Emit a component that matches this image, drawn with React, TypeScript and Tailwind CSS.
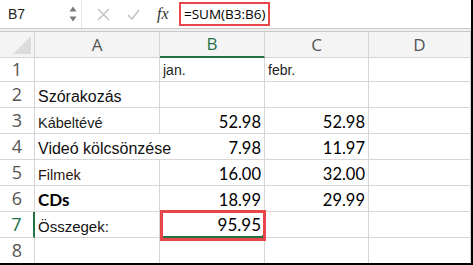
import React from "react";

function Cell({
  children,
  className = "",
}: {
  children?: React.ReactNode;
  className?: string;
}) {
  return (
    <div className={`border-r border-b border-[#d6d6d6] flex items-end px-[3px] leading-none overflow-visible whitespace-nowrap relative ${className}`}>
      {children}
    </div>
  );
}

function RowHead({ n, sel = false }: { n: number; sel?: boolean }) {
  return (
    <div
      className={`border-b border-[#d6d6d6] flex items-center justify-center text-[18px] ${
        sel ? "text-[#217346] border-r-2 border-r-[#217346]" : "text-[#555] border-r"
      }`}
      style={{ fontFamily: "'Open Sans', sans-serif" }}
    >
      {n}
    </div>
  );
}

const arial = { fontFamily: "'Liberation Sans', Arial, sans-serif" };
const calibri = { fontFamily: "Lato, 'Open Sans', sans-serif" };

function Num({ v, big = false }: { v: string; big?: boolean }) {
  return (
    <Cell className={`justify-end pb-[3px] ${big ? "text-[17px]" : "text-[16.5px]"} text-black`}>
      <span style={calibri}>{v}</span>
    </Cell>
  );
}

export default function App() {
  return (
    <div className="w-[473px] h-[265px] bg-white border-r-2 border-b-2 border-black overflow-hidden relative" style={arial}>
      {/* formula bar */}
      <div className="h-[29px] flex items-center border-b border-[#c8c8c8]">
        <div className="w-[82px] h-full flex items-center justify-between pl-[8px] pr-[4px] border-r border-[#e6e6e6]">
          <span className="text-[14px] text-[#222]">B7</span>
          <svg width="8" height="18" viewBox="0 0 8 18">
            <path d="M0.5 6.5 L4 1.5 L7.5 6.5 Z" fill="#7a7a7a" />
            <path d="M0.5 11.5 L4 16.5 L7.5 11.5 Z" fill="#7a7a7a" />
          </svg>
        </div>
        <div className="w-[96px] h-full flex items-center">
          <svg className="ml-[15px]" width="13" height="13" viewBox="0 0 13 13">
            <path d="M1 1 L12 12 M12 1 L1 12" stroke="#c4c4c4" strokeWidth="1.6" />
          </svg>
          <svg className="ml-[17px]" width="13" height="11" viewBox="0 0 13 11">
            <path d="M1 6 L5 10 L12 1" stroke="#c4c4c4" strokeWidth="1.6" fill="none" />
          </svg>
          <span
            className="ml-[17px] text-[16px] italic text-[#333]"
            style={{ fontFamily: "'Liberation Serif', serif" }}
          >
            fx
          </span>
        </div>
        <div className="ml-[1px] h-[24px] w-[91px] border-2 border-[#e8464a] flex items-center pl-[3px] text-[13.5px] text-black whitespace-nowrap" style={{ fontFamily: "'Open Sans', sans-serif" }}>
          =SUM(B3:B6)
        </div>
      </div>
      <div className="h-[3px] bg-[#f0f0f0] border-b border-[#c8c8c8]" />

      {/* grid */}
      <div
        className="grid"
        style={{
          gridTemplateColumns: "35px 125px 105px 104px 1fr",
          gridTemplateRows: "26px 24px 26px 26px 26px 26px 26px 26px 26px",
        }}
      >
        {/* header */}
        <div className="bg-[#f4f4f4] border-r border-b border-[#d6d6d6] relative">
          <svg className="absolute right-[3px] bottom-[3px]" width="18" height="18" viewBox="0 0 18 18">
            <path d="M18 0 L18 18 L0 18 Z" fill="#dcdcdc" />
          </svg>
        </div>
        {["A", "B", "C", "D"].map((c) => (
          <div
            key={c}
            className={`bg-[#f4f4f4] border-r border-[#d6d6d6] flex items-center justify-center text-[17px] ${
              c === "B" ? "text-[#217346] border-b-2 border-b-[#217346]" : "text-[#555] border-b"
            }`}
            style={{ fontFamily: "'Open Sans', sans-serif" }}
          >
            {c}
          </div>
        ))}

        {/* row 1 */}
        <RowHead n={1} />
        <Cell />
        <Cell className="text-[14px] text-[#222] pb-[4px]">jan.</Cell>
        <Cell className="text-[14px] text-[#222] pb-[4px]">febr.</Cell>
        <Cell />

        {/* row 2 */}
        <RowHead n={2} />
        <Cell className="text-[16px] text-[#111] pb-[2px]">Szórakozás</Cell>
        <Cell />
        <Cell />
        <Cell />

        {/* row 3 */}
        <RowHead n={3} />
        <Cell className="text-[14.5px] text-[#1a1a1a] pb-[3px]">Kábeltévé</Cell>
        <Num v="52.98" />
        <Num v="52.98" />
        <Cell />

        {/* row 4 */}
        <RowHead n={4} />
        <Cell className="text-[16px] text-[#111] z-10 border-r-0 pb-[2px]">Videó kölcsönzése</Cell>
        <Num v="7.98" />
        <Num v="11.97" />
        <Cell />

        {/* row 5 */}
        <RowHead n={5} />
        <Cell className="text-[14.5px] text-[#2a1616] pb-[3px]">Filmek</Cell>
        <Num v="16.00" />
        <Num v="32.00" />
        <Cell />

        {/* row 6 */}
        <RowHead n={6} />
        <Cell className="text-[17px] text-black font-bold pb-[3px]"><span style={calibri}>CDs</span></Cell>
        <Num v="18.99" />
        <Num v="29.99" />
        <Cell />

        {/* row 7 */}
        <RowHead n={7} sel />
        <Cell className="text-[15px] text-[#111] pb-[3px]">Összegek:</Cell>
        <Cell className="justify-end pb-[3px] text-[17px] text-black border-b-2 border-b-[#217346]">
          <span style={calibri}>95.95</span>
          <span className="absolute right-[-2px] bottom-[-3px] w-[4px] h-[4px] bg-[#217346]" />
        </Cell>
        <Cell />
        <Cell />

        {/* row 8 */}
        <RowHead n={8} />
        <Cell />
        <Cell />
        <Cell />
        <Cell />
      </div>

      {/* red annotation box around B7 */}
      <div className="absolute left-[160px] top-[210px] w-[106px] h-[31px] border-[3px] border-[#e8464a] pointer-events-none" />
    </div>
  );
}
